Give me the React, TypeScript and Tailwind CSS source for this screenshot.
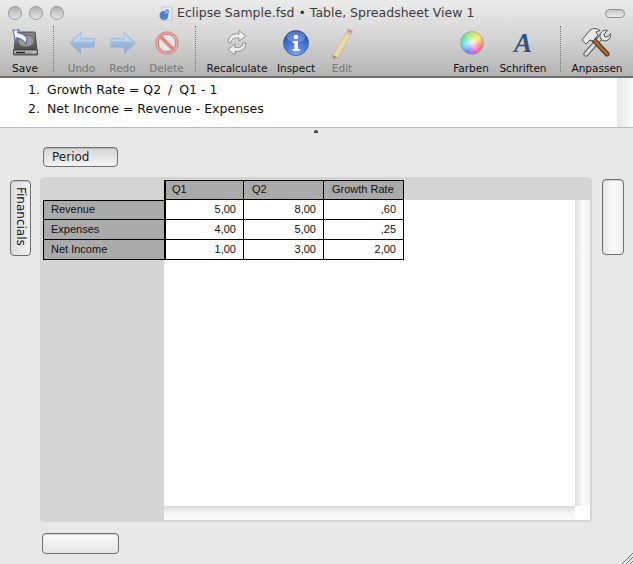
import React from "react";

const ui = "font-['DejaVu_Sans',sans-serif]";
const cell = "font-['Liberation_Sans',sans-serif]";

function Disk() {
  return (
    <svg width="30" height="30" viewBox="0 0 30 30">
      <defs>
        <linearGradient id="dk" x1="0" y1="0" x2="0" y2="1"><stop offset="0" stopColor="#8c8c8c" /><stop offset="1" stopColor="#4a4a4a" /></linearGradient>
        <linearGradient id="dk2" x1="0" y1="0" x2="0" y2="1"><stop offset="0" stopColor="#d0d0d0" /><stop offset="1" stopColor="#707070" /></linearGradient>
      </defs>
      <path d="M6 4h19l2 19H4z" fill="url(#dk)" stroke="#333" strokeWidth="0.8" />
      <ellipse cx="16" cy="13" rx="8" ry="6" fill="#9a9a9a" stroke="#555" strokeWidth="0.6" />
      <path d="M3.5 22h24v5h-24z" fill="url(#dk2)" stroke="#333" strokeWidth="0.8" />
      <path d="M6 24.5h9" stroke="#222" strokeWidth="1.4" />
      <circle cx="24" cy="24.5" r="1" fill="#ddd" />
      <path d="M3 2l6 0-1.4 2.6c3.6.6 7.4 2.6 9.4 5.4l-1 6.5c-1.500-3.500-5-6-9-6.800l-1.600 2.800z" fill="#f4f6ff" stroke="#5d6fa8" strokeWidth="1.100" />
    </svg>
  );
}

function Arrow({ flip, id }: { flip?: boolean; id: string }) {
  return (
    <svg width="26" height="24" viewBox="0 0 26 24" className={flip ? "-scale-x-100" : ""}>
      <defs>
        <linearGradient id={id} x1="0" y1="0" x2="0" y2="1"><stop offset="0" stopColor="#aecbe8" /><stop offset="1" stopColor="#87a9cf" /></linearGradient>
      </defs>
      <path d="M0.500 12L12 1v6.500h13.500v9H12V23z" fill={`url(#${id})`} stroke="#9fb6d0" strokeWidth="0.600" />
      <path d="M3 11.500L11.500 3v5.500h13.500v2H9z" fill="#cfe0f2" opacity="0.700" />
    </svg>
  );
}

function NoIcon() {
  return (
    <svg width="24" height="24" viewBox="0 0 24 24">
      <circle cx="12" cy="12" r="11.300" fill="#e9a9a6" />
      <circle cx="12" cy="12" r="8.800" fill="#e4e4e4" stroke="#bd6662" strokeWidth="0.800" />
      <path d="M5.600 5.800L18.200 18.200" stroke="#d88985" strokeWidth="3.600" />
      <circle cx="12" cy="12" r="11.300" fill="none" stroke="#c67c78" strokeWidth="0.800" />
    </svg>
  );
}

function Recalc() {
  return (
    <svg width="24" height="30" viewBox="0 0 24 30">
      <path d="M3 14C3 8 8 5 14 6V2.500L21 8l-7 5V10C9 9.500 6 11 6 15z" fill="#ededed" stroke="#8d8d8d" strokeWidth="1" strokeLinejoin="round" />
      <path d="M21 15c0 6-5 9-11 8.500V27l-7-5.500L10 16v3.500c5 .5 8-1 8-4.500z" fill="#ededed" stroke="#8d8d8d" strokeWidth="1" strokeLinejoin="round" />
    </svg>
  );
}

function Info() {
  return (
    <svg width="26" height="26" viewBox="0 0 26 26">
      <defs>
        <radialGradient id="ib" cx="0.500" cy="0.950" r="0.950"><stop offset="0" stopColor="#7ea6ef" /><stop offset="0.600" stopColor="#3f6fd0" /><stop offset="1" stopColor="#2a4fa8" /></radialGradient>
      </defs>
      <circle cx="13" cy="13" r="12.500" fill="url(#ib)" stroke="#2c4a91" strokeWidth="0.700" />
      <ellipse cx="13" cy="7" rx="9" ry="5.500" fill="#fff" opacity="0.220" />
      <circle cx="13" cy="7" r="2.300" fill="#fff" />
      <path d="M9.800 11h5.200v8h1.700v2H9.800v-2h1.600v-6H9.800z" fill="#fff" />
    </svg>
  );
}

function Pencil() {
  return (
    <svg width="24" height="34" viewBox="0 0 24 34">
      <path d="M3 29L17 5l4.500 2.600L8 31.500 3 32.500z" fill="#ecd9aa" stroke="#b9ab8c" strokeWidth="0.600" />
      <path d="M17 5l4.500 2.600-1.300 2.300-4.500-2.600z" fill="#c9c9c9" />
      <path d="M18.300 2.700L22.800 5.300l-1.300 2.300L17 5z" fill="#d28d8d" />
      <path d="M3 29l1.500 1 3.500 1.500-5 1z" fill="#8a8a7c" />
      <path d="M2 33.500h10" stroke="#bdbdbd" strokeWidth="1" />
    </svg>
  );
}

function Tools() {
  return (
    <svg width="32" height="32" viewBox="0 0 32 32">
      <path d="M5 27L20 10" stroke="#555" strokeWidth="5.200" strokeLinecap="round" />
      <path d="M5 27L20 10" stroke="#ddd" strokeWidth="3.400" strokeLinecap="round" />
      <path d="M20 12c-2-3-1-7 3-8.500 1.500-.500 3-.300 3.500 0L23 7l1 3 3.500-.500 2-3c.7 3-.5 6-3.500 7-2 .7-4.500.5-6-1.500z" fill="#e6e6e6" stroke="#444" strokeWidth="0.900" strokeLinejoin="round" />
      <path d="M11 11L26 27" stroke="#4b2c14" strokeWidth="5" strokeLinecap="round" />
      <path d="M11 11L26 27" stroke="#a86a32" strokeWidth="3" strokeLinecap="round" />
      <path d="M1 13L9 3c3-2 7-2 10 .500L15 5l2 3-5 6-3-1-4 4z" fill="#e8e8e8" stroke="#444" strokeWidth="0.900" strokeLinejoin="round" />
    </svg>
  );
}

function Tool({ w, label, dim, children }: { w: string; label: string; dim?: boolean; children: React.ReactNode }) {
  return (
    <div className={`${w} flex flex-col items-center shrink-0`}>
      <div className="h-[34px] flex items-center justify-center">{children}</div>
      <div className={`mt-[2px] text-[10.5px] leading-[13px] whitespace-nowrap ${dim ? "text-[#777777]" : "text-[#111111]"}`}>{label}</div>
    </div>
  );
}

function Sep({ cls }: { cls: string }) {
  return <div className={`w-px h-[46px] shrink-0 border-l border-dotted border-[#777777] ${cls}`} />;
}

const btn = "border border-[#6f6f6f] rounded-[4px] shadow-[inset_0_1px_1px_rgba(0,0,0,0.15)]";
const headCell = `box-border w-[80px] h-[20px] border-t border-b border-r border-black bg-[#aaaaaa] text-[11px] leading-[16px] text-[#111111] ${cell}`;
const rowHead = `box-border h-[20px] border-b border-l border-black bg-[#aaaaaa] pl-[7px] text-[11px] text-[#111111] ${cell}`;
const dataCell = `box-border w-[80px] h-[20px] border-b border-r border-black pr-[7px] text-right text-[11px] leading-[19px] text-[#111111] ${cell}`;

const data = [
  ["Revenue", "5,00", "8,00", ",60"],
  ["Expenses", "4,00", "5,00", ",25"],
  ["Net Income", "1,00", "3,00", "2,00"],
];

export default function App() {
  return (
    <div className={`relative w-[633px] h-[564px] overflow-hidden bg-[#e8e8e8] flex flex-col ${ui}`}>
      <div className="h-[78px] shrink-0 flex flex-col rounded-t-[5px] bg-gradient-to-b from-[#ebebeb] via-[#d4d4d4] to-[#b4b4b4] border-b-2 border-[#6f6f6f]">
        <div className="h-[26px] shrink-0 flex items-center pl-[8px] pr-[8px]">
          <div className="flex gap-[7px]">
            {[0, 1, 2].map((i) => (
              <div key={i} className="w-[14px] h-[14px] rounded-full border border-[#9a9a9a] bg-gradient-to-b from-[#b0b0b0] to-[#e6e6e6]" />
            ))}
          </div>
          <div className="ml-[94px] w-[15px] h-[15px] flex items-end">
            <svg width="15" height="15" viewBox="0 0 15 15">
              <rect x="4" y="1" width="10" height="13" fill="#e9edf3" stroke="#aeb5c0" strokeWidth="0.700" />
              <circle cx="6" cy="9.500" r="4.500" fill="#4c82c8" />
              <circle cx="9" cy="5.500" r="2.500" fill="#7fa9dc" />
            </svg>
          </div>
          <div className="ml-[4px] text-[12.5px] leading-[16px] whitespace-nowrap text-[#3c3c3c]">Eclipse Sample.fsd • Table, Spreadsheet View 1</div>
          <div className="ml-auto w-[20px] h-[9px] rounded-full border border-[#8d8d8d] bg-gradient-to-b from-[#c4c4c4] to-[#eeeeee]" />
        </div>
        <div className="flex items-start">
          <Tool w="w-[50px]" label="Save"><Disk /></Tool>
          <Sep cls="ml-[3px] mr-[7px]" />
          <Tool w="w-[41px]" label="Undo" dim><Arrow id="a1" /></Tool>
          <Tool w="w-[41px]" label="Redo" dim><Arrow id="a2" flip /></Tool>
          <Tool w="w-[47px]" label="Delete" dim><NoIcon /></Tool>
          <Sep cls="ml-[5px] mr-[6px]" />
          <Tool w="w-[70px]" label="Recalculate"><Recalc /></Tool>
          <Tool w="w-[48px]" label="Inspect"><Info /></Tool>
          <Tool w="w-[44px]" label="Edit" dim><Pencil /></Tool>
          <div className="w-[81px] shrink-0" />
          <Tool w="w-[52px]" label="Farben">
            <div className="ml-[2px] w-[24px] h-[24px] rounded-full border border-[#a8a8a8] bg-[radial-gradient(circle,rgba(255,255,255,0.9)_0%,rgba(255,255,255,0)_85%),conic-gradient(from_0deg,#a8e030,#f8e030,#f85a30,#f030c0,#5050f0,#30d0f0,#30e070,#a8e030)]" />
          </Tool>
          <Tool w="w-[52px]" label="Schriften">
            <div className="font-['Liberation_Serif',serif] italic font-bold text-[27px] leading-[30px] text-[#35507f]">A</div>
          </Tool>
          <Sep cls="ml-[11px] mr-[3px]" />
          <Tool w="w-[66px]" label="Anpassen"><Tools /></Tool>
        </div>
      </div>

      <div className="h-[49px] shrink-0 flex bg-white border-b border-[#bcbcbc] box-content">
        <div className="flex-1 pt-[2px] text-[12.5px] leading-[19px] text-[#111111]">
          <div className="flex"><span className="w-[40px] text-right">1.</span><span className="ml-[7px] whitespace-pre">Growth Rate = Q2 <span className="mx-[3px]">/</span> Q1 - 1</span></div>
          <div className="flex"><span className="w-[40px] text-right">2.</span><span className="ml-[7px] whitespace-pre">Net Income = Revenue - Expenses</span></div>
        </div>
        <div className="w-[16px] bg-gradient-to-r from-[#e8e8e8] to-[#fafafa]" />
      </div>
      <div className="absolute left-[314px] top-[130px] w-[4px] h-[3px] rounded-t-full bg-[#444444]" />

      <div className={`ml-[43px] mt-[19px] w-[75px] h-[20px] shrink-0 ${btn} bg-gradient-to-b from-[#d6d6d6] to-[#f4f4f4] pl-[8px] text-[12px] leading-[19px] text-[#222222]`}>Period</div>

      <div className="flex items-start mt-[10px] shrink-0">
        <div className={`ml-[10px] mt-[3px] w-[21px] h-[76px] pb-[3px] shrink-0 ${btn} bg-gradient-to-r from-[#dcdcdc] to-[#f2f2f2] flex items-center justify-center`}>
          <span className="[writing-mode:vertical-rl] text-[12px] leading-[19px] text-[#111111]">Financials</span>
        </div>
        <div className="ml-[9px] w-[552px] h-[345px] shrink-0 rounded-[5px] bg-[#d4d4d4] pt-[3px] pl-[3px] grid grid-cols-[121px_411px_15px] grid-rows-[20px_306px_14px]">
          <div />
          <div className="flex">
            <div className={`${headCell} border-l-2 pl-[6px]`}>Q1</div>
            <div className={`${headCell} pl-[8px]`}>Q2</div>
            <div className={`${headCell} pl-[8px]`}>Growth Rate</div>
          </div>
          <div />
          <div>
            {data.map((r, i) => (
              <div key={r[0]} className={`${rowHead} ${i === 0 ? "border-t leading-[17px]" : "leading-[19px]"}`}>{r[0]}</div>
            ))}
          </div>
          <div className="bg-white">
            {data.map((r) => (
              <div key={r[0]} className="flex">
                <div className={`${dataCell} border-l-2`}>{r[1]}</div>
                <div className={dataCell}>{r[2]}</div>
                <div className={dataCell}>{r[3]}</div>
              </div>
            ))}
          </div>
          <div className="bg-gradient-to-r from-[#dedede] via-[#f8f8f8] to-[#f4f4f4]" />
          <div />
          <div className="bg-gradient-to-b from-[#d8d8d8] via-[#f6f6f6] to-[#fbfbfb]" />
          <div className="bg-white" />
        </div>
        <div className={`ml-[10px] mt-[2px] w-[22px] h-[76px] shrink-0 ${btn} bg-gradient-to-r from-[#e4e4e4] via-[#fafafa] to-[#eeeeee]`} />
      </div>

      <div className={`ml-[42px] mt-[11px] w-[77px] h-[21px] shrink-0 ${btn} bg-gradient-to-b from-[#fafafa] to-[#e6e6e6]`} />

      <svg className="absolute right-0 bottom-0" width="12" height="12" viewBox="0 0 12 12">
        <path d="M1 12L12 1M5 12L12 5M9 12L12 9" stroke="#777777" strokeWidth="1" />
      </svg>
    </div>
  );
}
